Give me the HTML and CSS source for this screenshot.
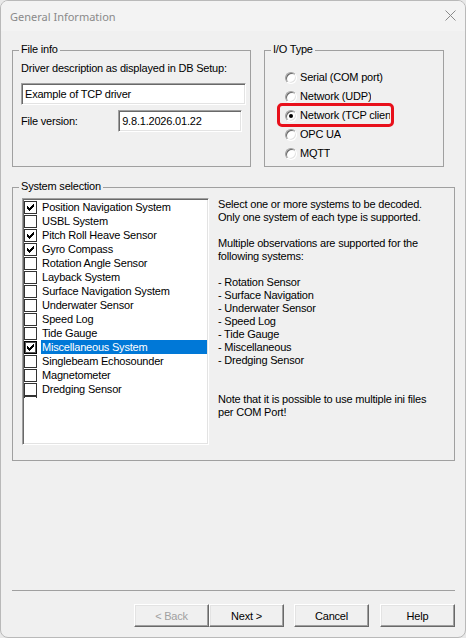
FILE: index.html
```html
<!DOCTYPE html>
<html lang="en">
<head>
  <meta charset="UTF-8">
  <title>General Information</title>
  <link rel="stylesheet" href="styles.css">
</head>
<body>
  <div class="window">
    <div class="titlebar">
      <span class="title">General Information</span>
      <svg class="close" width="11" height="11" viewBox="0 0 11 11">
        <path d="M0.5 0.5 L10.5 10.5 M10.5 0.5 L0.5 10.5" stroke="#8a8a8a" stroke-width="1" fill="none"/>
      </svg>
    </div>

    <div class="dialog">
      <div class="top-row">
        <div class="group file-info">
          <div class="group-title">File info</div>
          <div class="label desc-label">Driver description as displayed in DB Setup:</div>
          <div class="edit desc-edit">Example of TCP driver</div>
          <div class="field-row">
            <span class="label">File version:</span>
            <div class="edit version-edit">9.8.1.2026.01.22</div>
          </div>
        </div>

        <div class="group io-type">
          <div class="group-title">I/O Type</div>
          <div class="radios">
            <div class="radio"><span class="dot"></span><span class="radio-text">Serial (COM port)</span></div>
            <div class="radio"><span class="dot"></span><span class="radio-text">Network (UDP)</span></div>
            <div class="radio checked marked"><span class="dot"></span><span class="radio-text">Network (TCP client)</span></div>
            <div class="radio"><span class="dot"></span><span class="radio-text">OPC UA</span></div>
            <div class="radio"><span class="dot"></span><span class="radio-text">MQTT</span></div>
          </div>
        </div>
      </div>

      <div class="group systems">
        <div class="group-title">System selection</div>
        <div class="systems-body">
          <div class="listbox">
            <div class="item on"><span class="box"></span><span class="item-text">Position Navigation System</span></div>
            <div class="item"><span class="box"></span><span class="item-text">USBL System</span></div>
            <div class="item on"><span class="box"></span><span class="item-text">Pitch Roll Heave Sensor</span></div>
            <div class="item on"><span class="box"></span><span class="item-text">Gyro Compass</span></div>
            <div class="item"><span class="box"></span><span class="item-text">Rotation Angle Sensor</span></div>
            <div class="item"><span class="box"></span><span class="item-text">Layback System</span></div>
            <div class="item"><span class="box"></span><span class="item-text">Surface Navigation System</span></div>
            <div class="item"><span class="box"></span><span class="item-text">Underwater Sensor</span></div>
            <div class="item"><span class="box"></span><span class="item-text">Speed Log</span></div>
            <div class="item"><span class="box"></span><span class="item-text">Tide Gauge</span></div>
            <div class="item on selected"><span class="box"></span><span class="item-text">Miscellaneous System</span></div>
            <div class="item"><span class="box"></span><span class="item-text">Singlebeam Echosounder</span></div>
            <div class="item"><span class="box"></span><span class="item-text">Magnetometer</span></div>
            <div class="item"><span class="box"></span><span class="item-text">Dredging Sensor</span></div>
            <div class="item stub"><span class="box"></span></div>
          </div>

          <div class="hint">
            <p>Select one or more systems to be decoded.<br>Only one system of each type is supported.</p>
            <p>Multiple observations are supported for the<br>following systems:</p>
            <p>- Rotation Sensor<br>- Surface Navigation<br>- Underwater Sensor<br>- Speed Log<br>- Tide Gauge<br>- Miscellaneous<br>- Dredging Sensor</p>
            <p class="note">Note that it is possible to use multiple ini files<br>per COM Port!</p>
          </div>
        </div>
      </div>

      <div class="separator"></div>

      <div class="buttons">
        <button class="btn" disabled>&lt; Back</button>
        <button class="btn">Next &gt;</button>
        <button class="btn cancel">Cancel</button>
        <button class="btn help">Help</button>
      </div>
    </div>
  </div>
</body>
</html>
```

FILE: styles.css
```css
html, body { margin: 0; padding: 0; background: #e9e9e9; }
body { font-family: "Liberation Sans", Arial, sans-serif; font-size: 11px; letter-spacing: -0.2px; color: #000; }

.window {
  width: 466px; height: 638px; box-sizing: border-box;
  border: 1px solid #b9b9b9; border-radius: 8px; overflow: hidden;
  background: #f0f0f0; display: flex; flex-direction: column;
}

/* title bar */
.titlebar {
  height: 30px; flex: none; background: #f3f3f3;
  display: flex; align-items: center; justify-content: space-between;
  padding: 0 9px 0 9px;
}
.title { font-family: "Noto Sans", "Open Sans", sans-serif; font-size: 11px; letter-spacing: 0; color: #8a8a8a; margin-top: 1px; }
.close { margin-top: -1px; }

.dialog { flex: 1; display: flex; flex-direction: column; padding: 19px 10px 10px 11px; }

/* group boxes */
.group { border: 1px solid #a0a0a0; box-sizing: border-box; padding: 0 8px; }
.group-title {
  width: fit-content; margin: -8px 0 0 -2px; padding: 0 2px;
  line-height: 13px; background: #f0f0f0;
}

.top-row { display: flex; gap: 13px; }
.file-info { width: 239px; height: 117px; }
.io-type { width: 180px; height: 117px; }

.label { line-height: 13px; }
.desc-label { margin-top: 6px; }

.edit {
  box-sizing: border-box; height: 22px; background: #fff;
  border: 1px solid; border-color: #a0a0a0 #fff #fff #a0a0a0;
  box-shadow: inset 1px 1px 0 #696969, inset -1px -1px 0 #e3e3e3;
  line-height: 20px; padding-left: 3px; white-space: nowrap;
}
.desc-edit { width: 225px; margin-top: 8px; }
.field-row { display: flex; align-items: center; margin-top: 5px; }
.field-row .label { width: 99px; }
.version-edit { width: 126px; }

/* radio buttons */
.radios { margin-top: 12px; }
.radio { position: relative; display: flex; align-items: center; height: 19px; }
.dot {
  width: 12px; height: 12px; box-sizing: border-box; margin-left: 12px; margin-right: 3px;
  border-radius: 50%; background: #fff; border: 1px solid;
  border-color: #a0a0a0 #fff #fff #a0a0a0;
  box-shadow: inset 1px 1px 0 #696969, inset -1px -1px 0 #e3e3e3;
  display: flex; align-items: center; justify-content: center;
}
.radio.checked .dot::before { content: ""; width: 4px; height: 4px; border-radius: 50%; background: #000; }
.radio-text { max-width: 90px; overflow: hidden; white-space: nowrap; line-height: 13px; }
.radio.marked::after {
  content: ""; position: absolute; left: 4px; top: -3px; width: 117px; height: 24px;
  box-sizing: border-box; border: 3px solid #e8101b; border-radius: 5px;
}

/* system selection */
.systems { margin-top: 20px; height: 274px; }
.systems-body { display: flex; gap: 9px; margin-top: 5px; margin-left: 1px; }

.listbox {
  width: 187px; height: 247px; box-sizing: border-box; flex: none;
  background: #fff; border: 1px solid; border-color: #a0a0a0 #fff #fff #a0a0a0;
  box-shadow: inset 1px 1px 0 #696969, inset -1px -1px 0 #e3e3e3;
  padding: 1px 1px 0 1px; overflow: hidden;
}
.item { display: flex; align-items: center; height: 14px; }
.box {
  width: 13px; height: 13px; box-sizing: border-box; flex: none; margin-right: 4px;
  border: 1px solid #333; background: #fff;
  display: flex; align-items: center; justify-content: center;
}
.item.on .box::before {
  content: ""; width: 7px; height: 7px;
  background: url("data:image/svg+xml,%3Csvg xmlns='http://www.w3.org/2000/svg' width='7' height='7' viewBox='0 0 7 7'%3E%3Cpath d='M0 2h1v1h1v1h1V3h1V2h1V1h1V0h1v3h-1v1h-1v1h-1v1h-1v1h-1V6H1V5H0z' fill='%23000'/%3E%3C/svg%3E") no-repeat;
}
.item-text { flex: 1; line-height: 14px; padding-left: 1px; white-space: nowrap; }
.item.selected .item-text { background: #0078d7; color: #fff; }
.item.selected .box { border-color: #000; box-shadow: inset 0 0 0 1px #555; }
.item.stub { height: 2px; align-items: flex-start; overflow: hidden; }

.hint { line-height: 13px; margin-top: 0; }
.hint p { margin: 0 0 13px 0; }
.hint .note { margin-top: 26px; }

/* footer */
.separator { margin-top: auto; height: 1px; background: #a0a0a0; margin-bottom: 13px; }
.buttons { display: flex; justify-content: flex-end; }
.btn {
  width: 75px; height: 23px; box-sizing: border-box; margin: 0;
  font-family: "Liberation Sans", Arial, sans-serif; font-size: 11px; letter-spacing: -0.2px; color: #000;
  background: #f0f0f0; border: 1px solid; border-color: #fff #696969 #696969 #fff;
  box-shadow: inset -1px -1px 0 #a0a0a0, inset 1px 1px 0 #e3e3e3; padding: 0;
}
.btn:disabled { color: #a0a0a0; }
.cancel { margin-left: 10px; }
.help { margin-left: 11px; }
```
